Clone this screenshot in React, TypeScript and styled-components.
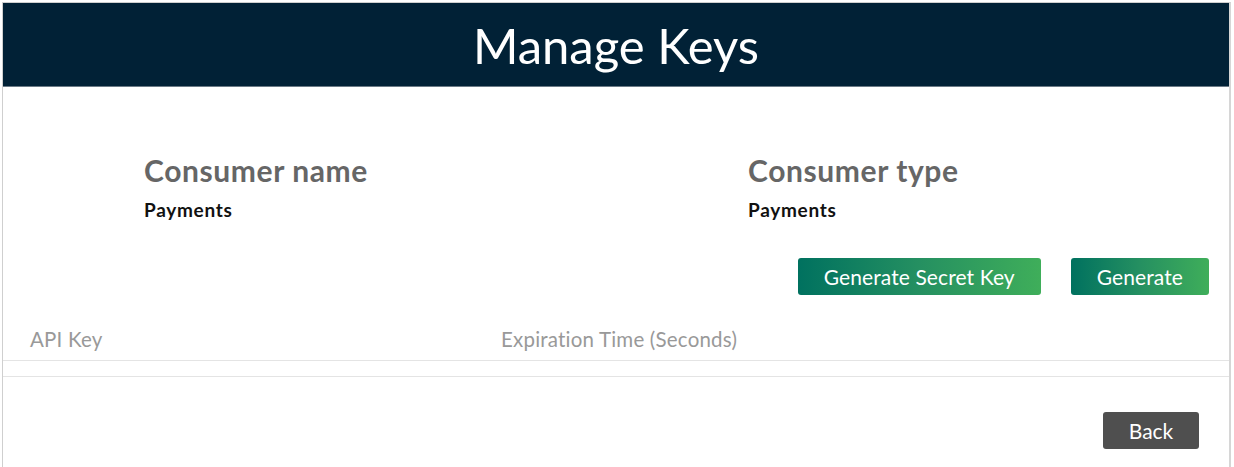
import React from "react";
import styled, { createGlobalStyle } from "styled-components";

const Global = createGlobalStyle`
  html, body { margin: 0; padding: 0; background: #fff; }
  body { font-family: Lato, "Open Sans", sans-serif; }
  * { box-sizing: border-box; }
`;

const Modal = styled.div`
  margin: 2px 3px 0 2px;
  height: 465px;
  border: 1px solid #cfcfcf;
  border-bottom: none;
  border-right: 2px solid #d6d6d6;
  display: flex;
  flex-direction: column;
  overflow: hidden;
`;

const Header = styled.header`
  height: 84px;
  background: #012136;
  border-bottom: 1px solid #6b7a86;
  display: flex;
  align-items: center;
  justify-content: center;
`;

const Title = styled.h1`
  margin: 0;
  color: #fff;
  font-size: 49px;
  font-weight: 400;
  line-height: 1;
  padding-top: 2px;
`;

const InfoGrid = styled.div`
  display: grid;
  grid-template-columns: 604px 1fr;
  padding: 66px 0 0 141px;
`;

const InfoBlock = styled.div`
  display: flex;
  flex-direction: column;
`;

const InfoLabel = styled.div`
  color: #666;
  font-size: 30px;
  font-weight: 700;
  line-height: 34px;
  letter-spacing: 0.6px;
`;

const InfoValue = styled.div`
  color: #111;
  font-size: 19px;
  font-weight: 700;
  line-height: 22px;
  letter-spacing: 0.7px;
  margin-top: 12px;
`;

const Actions = styled.div`
  display: flex;
  justify-content: flex-end;
  gap: 30px;
  padding: 0 20px 0 0;
  margin-top: 37px;
`;

const GradientButton = styled.button`
  height: 37px;
  padding: 0 26px;
  border: none;
  border-radius: 3px;
  background: linear-gradient(90deg, #00715f 0%, #259061 50%, #3fae5a 100%);
  color: #fff;
  font-family: inherit;
  font-size: 21px;
  font-weight: 400;
  letter-spacing: 0.1px;
  cursor: pointer;
`;

const Table = styled.div`
  margin-top: 23px;
  display: flex;
  flex-direction: column;
`;

const HeadRow = styled.div`
  display: grid;
  grid-template-columns: 471px 1fr;
  padding: 0 0 0 27px;
  height: 43px;
  align-items: center;
  border-bottom: 1px solid #e4e4e4;
`;

const HeadCell = styled.div`
  color: #999;
  font-size: 20.5px;
  font-weight: 400;
  letter-spacing: 0.2px;
`;

const EmptyRow = styled.div`
  height: 16px;
  border-bottom: 1px solid #e4e4e4;
`;

const Footer = styled.div`
  display: flex;
  justify-content: flex-end;
  padding-right: 30px;
  margin-top: 35px;
`;

const BackButton = styled.button`
  height: 37px;
  width: 96px;
  border: none;
  border-radius: 3px;
  background: #4f4f4f;
  color: #fff;
  font-family: inherit;
  font-size: 21px;
  cursor: pointer;
`;

export default function App() {
  return (
    <>
      <Global />
      <Modal>
        <Header>
          <Title>Manage Keys</Title>
        </Header>
        <InfoGrid>
          <InfoBlock>
            <InfoLabel>Consumer name</InfoLabel>
            <InfoValue>Payments</InfoValue>
          </InfoBlock>
          <InfoBlock>
            <InfoLabel>Consumer type</InfoLabel>
            <InfoValue>Payments</InfoValue>
          </InfoBlock>
        </InfoGrid>
        <Actions>
          <GradientButton>Generate Secret Key</GradientButton>
          <GradientButton>Generate</GradientButton>
        </Actions>
        <Table>
          <HeadRow>
            <HeadCell>API Key</HeadCell>
            <HeadCell>Expiration Time (Seconds)</HeadCell>
          </HeadRow>
          <EmptyRow />
        </Table>
        <Footer>
          <BackButton>Back</BackButton>
        </Footer>
      </Modal>
    </>
  );
}
